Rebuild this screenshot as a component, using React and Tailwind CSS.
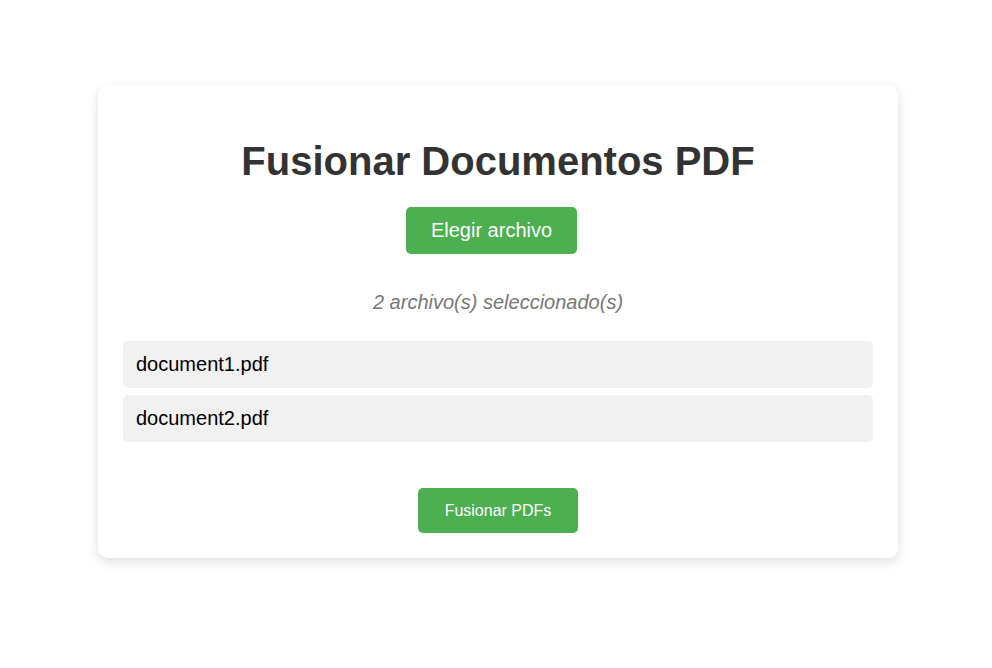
import React, { useState } from 'react';

const App = () => {
  const [files] = useState(['document1.pdf', 'document2.pdf']);

  const handleMerge = () => {
    console.log('Merging files:', files);
  };

  return (
    <div
      className="min-h-[668px] bg-white pt-[85px] pl-[4px]"
      style={{ fontFamily: '"Liberation Sans", Arial, sans-serif' }}
    >
      <div className="mx-auto w-[800px] rounded-[10px] bg-white p-[25px] text-center shadow-[0_4px_12px_rgba(0,0,0,0.13)]">
        <h1 className="mt-[28px] text-[40px] leading-[46px] font-bold text-[#333]">
          Fusionar Documentos PDF
        </h1>

        <div className="mt-[23px] flex justify-center">
          <label className="mr-[13px] cursor-pointer rounded-[5px] bg-[#4caf50] px-[25px] py-[12px] text-[20px] leading-[23px] text-white">
            Elegir archivo
            <input type="file" accept="application/pdf" multiple className="hidden" />
          </label>
        </div>

        <p className="mt-[37px] text-[20px] leading-[23px] text-[#777] italic">
          {files.length} archivo(s) seleccionado(s)
        </p>

        <ul className="mt-[27px] flex flex-col gap-[7px] text-left">
          {files.map((name) => (
            <li
              key={name}
              className="rounded-[5px] bg-[#f1f1f1] px-[13px] py-[12px] text-[20px] leading-[23px] text-black"
            >
              {name}
            </li>
          ))}
        </ul>

        <button
          onClick={handleMerge}
          className="mt-[46px] rounded-[5px] bg-[#4caf50] px-[27px] py-[13px] text-[16px] leading-[19px] text-white"
        >
          Fusionar PDFs
        </button>
      </div>
    </div>
  );
};

export default App;
